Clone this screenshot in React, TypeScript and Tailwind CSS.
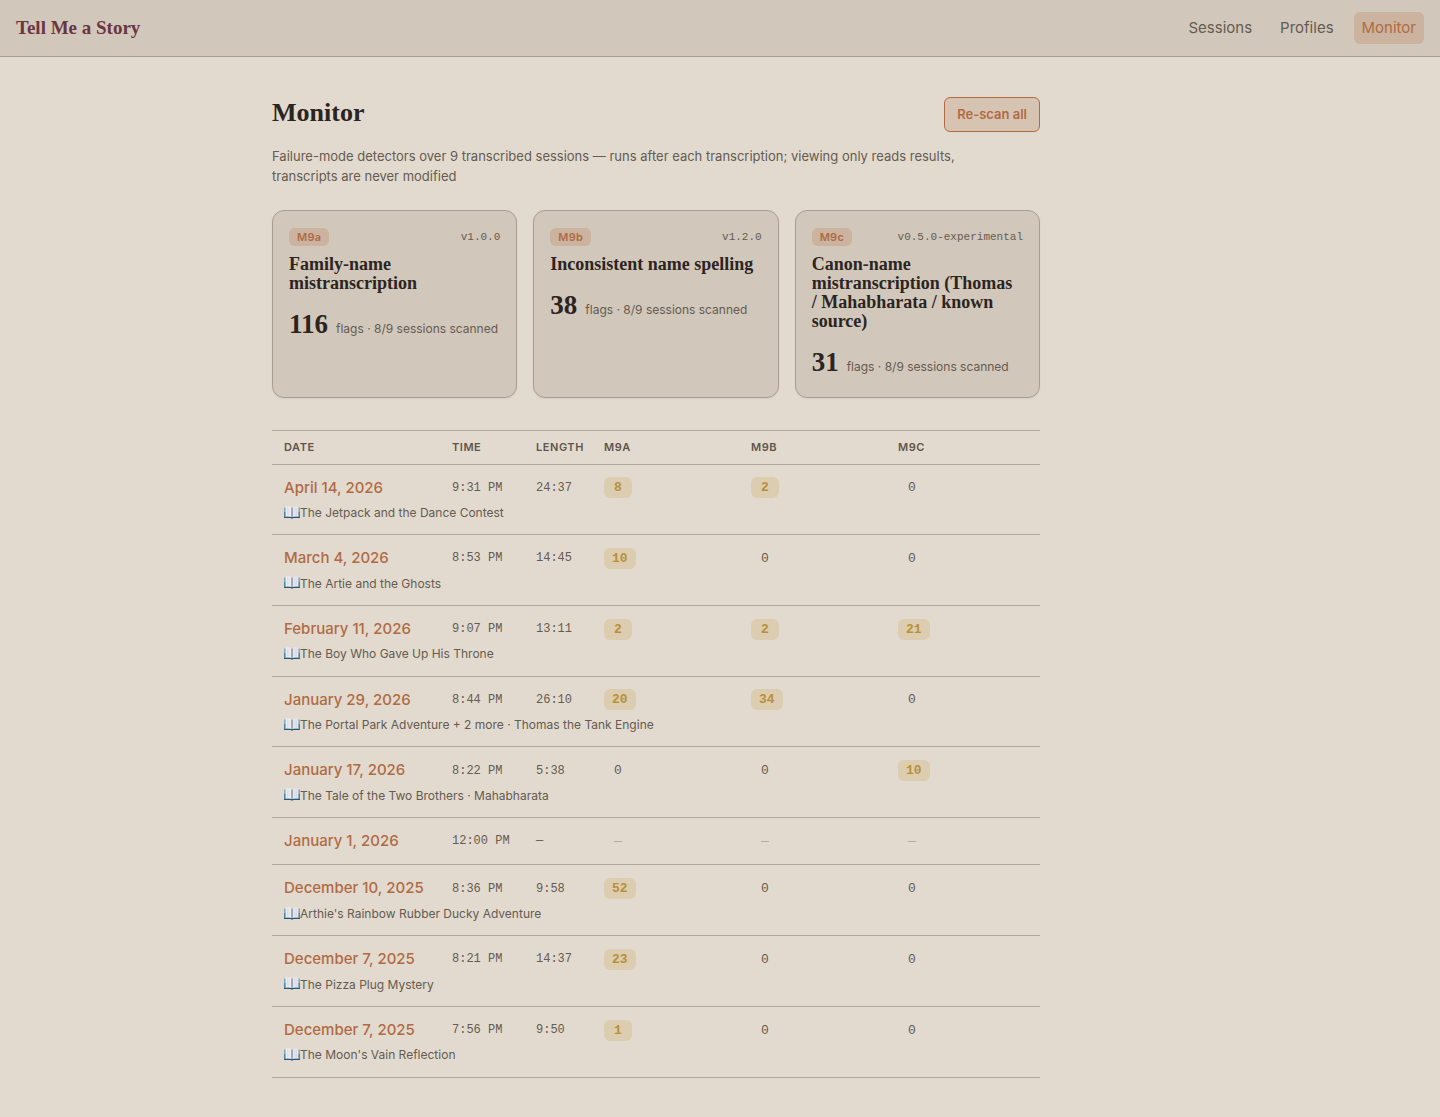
const detectors = [
  { id: "M9a", version: "v1.0.0", title: "Family-name mistranscription", flags: 116 },
  { id: "M9b", version: "v1.2.0", title: "Inconsistent name spelling", flags: 38 },
  {
    id: "M9c",
    version: "v0.5.0-experimental",
    title: "Canon-name mistranscription (Thomas / Mahabharata / known source)",
    flags: 31,
  },
];

type Session = {
  date: string;
  time: string;
  length: string;
  counts: (number | null)[];
  story?: string;
};

const sessions: Session[] = [
  { date: "April 14, 2026", time: "9:31 PM", length: "24:37", counts: [8, 2, 0], story: "The Jetpack and the Dance Contest" },
  { date: "March 4, 2026", time: "8:53 PM", length: "14:45", counts: [10, 0, 0], story: "The Artie and the Ghosts" },
  { date: "February 11, 2026", time: "9:07 PM", length: "13:11", counts: [2, 2, 21], story: "The Boy Who Gave Up His Throne" },
  { date: "January 29, 2026", time: "8:44 PM", length: "26:10", counts: [20, 34, 0], story: "The Portal Park Adventure + 2 more · Thomas the Tank Engine" },
  { date: "January 17, 2026", time: "8:22 PM", length: "5:38", counts: [0, 0, 10], story: "The Tale of the Two Brothers · Mahabharata" },
  { date: "January 1, 2026", time: "12:00 PM", length: "—", counts: [null, null, null] },
  { date: "December 10, 2025", time: "8:36 PM", length: "9:58", counts: [52, 0, 0], story: "Arthie's Rainbow Rubber Ducky Adventure" },
  { date: "December 7, 2025", time: "8:21 PM", length: "14:37", counts: [23, 0, 0], story: "The Pizza Plug Mystery" },
  { date: "December 7, 2025", time: "7:56 PM", length: "9:50", counts: [1, 0, 0], story: "The Moon's Vain Reflection" },
];

function BookIcon() {
  return (
    <svg className="w-4 h-4 shrink-0" viewBox="0 0 16 16" aria-hidden="true">
      <path d="M0 2.500h16V13H0z" fill="#7fa9bf" />
      <path d="M0 7h16v6H9.500L8 13.500 6.500 13H0z" fill="#4b86a6" />
      <path d="M0 12h16v1H9.500L8 13.600 6.500 13H0z" fill="#2b5670" />
      <path d="M1.600 2C3.500 1.300 6.500 1.300 8 2.500v9.600c-1.700-.9-4.500-.9-6.400-.3z" fill="#efeff3" />
      <path d="M14.400 2C12.500 1.300 9.500 1.300 8 2.500v9.600c1.700-.9 4.500-.9 6.400-.3z" fill="#e6e7ed" />
      <path d="M3.500 2.500v8M5 2.500v8M11 2.500v8M12.500 2.500v8" stroke="#d3d5de" strokeWidth=".7" />
      <path d="M7 2.200 8 2.700l1-.5v9.300l-1 .6-1-.6z" fill="#a3a7b3" />
    </svg>
  );
}

function Count({ value }: { value: number | null }) {
  const base = "inline-block min-w-7 px-2 rounded-md text-center text-[13px] leading-[21px] font-['Liberation_Mono',monospace]";
  if (value === null) {
    return <span className={`${base} text-[#b5aca0]`}>—</span>;
  }
  if (value === 0) {
    return <span className={`${base} text-[#655b50]`}>0</span>;
  }
  return <span className={`${base} font-bold text-[#b8903a] bg-[#dccdb1]`}>{value}</span>;
}

function Navbar() {
  return (
    <header className="bg-[#d1c7bb] border-b border-[#a99d91]">
      <div className="flex items-center justify-between h-14 px-4">
        <a href="#" className="text-[19px] font-bold text-[#6b3541] font-['Liberation_Serif',serif]">
          Tell Me a Story
        </a>
        <nav className="flex items-center gap-3 text-[15px] leading-6 text-[#655b50]">
          <a href="#sessions" className="px-2 py-1 rounded-md">Sessions</a>
          <a href="#profiles" className="px-2 py-1 rounded-md">Profiles</a>
          <a href="#monitor" className="px-2 py-1 rounded-md bg-[#cbb3a0] text-[#b06b43]">Monitor</a>
        </nav>
      </div>
    </header>
  );
}

export default function App() {
  return (
    <div className="min-h-screen bg-[#e2dacf] text-[#2c2420] font-[Inter,sans-serif]">
      <Navbar />
      <main className="max-w-4xl mx-auto pt-10 pb-10">
        <div className="max-w-3xl">
          <div className="flex items-start justify-between">
            <h1 className="text-[26px] leading-8 font-bold font-['Liberation_Serif',serif]">Monitor</h1>
            <button
              type="button"
              className="px-3 py-2 rounded-md border border-[#b06b43] bg-[#d7c3b1] text-[13px] leading-[17px] font-semibold text-[#b06b43]"
            >
              Re-scan all
            </button>
          </div>
          <p className="mt-3.5 pr-6 text-[13px] leading-5 text-[#655b50]">
            Failure-mode detectors over 9 transcribed sessions — runs after each transcription; viewing only reads results,
            transcripts are never modified
          </p>

          <div className="grid grid-cols-3 gap-4 mt-6">
            {detectors.map((d) => (
              <section key={d.id} className="p-4 rounded-xl border border-[#a99d91] bg-[#d1c7bb] shadow-xs">
                <div className="flex items-center justify-between h-5">
                  <span className="px-2 rounded-md bg-[#cbb3a0] text-[11px] leading-[18px] font-semibold tracking-wide text-[#b06b43]">
                    {d.id}
                  </span>
                  <span className="text-[11px] text-[#655b50] font-['Liberation_Mono',monospace]">{d.version}</span>
                </div>
                <h2 className="mt-2 pr-1 text-[18px] leading-[19px] font-bold font-['Liberation_Serif',serif]">{d.title}</h2>
                <p className="flex items-baseline gap-2 mt-3">
                  <span className="text-[27px] leading-[38px] font-bold font-['Liberation_Serif',serif]">{d.flags}</span>
                  <span className="text-[12px] text-[#655b50]">flags · 8/9 sessions scanned</span>
                </p>
              </section>
            ))}
          </div>

          <table className="w-full mt-8 table-fixed border-collapse border-y border-[#b1a79b] text-left">
            <colgroup>
              <col className="w-[168px]" />
              <col className="w-[84px]" />
              <col className="w-[68px]" />
              <col className="w-[147px]" />
              <col className="w-[147px]" />
              <col />
            </colgroup>
            <thead className="border-b border-[#b1a79b]">
              <tr className="text-[11px] leading-normal tracking-wider text-[#5f554a]">
                {["DATE", "TIME", "LENGTH", "M9A", "M9B", "M9C"].map((label) => (
                  <th key={label} scope="col" className="pl-3 py-2 font-semibold">{label}</th>
                ))}
              </tr>
            </thead>
            {sessions.map((s) => (
              <tbody key={s.date + s.time} className="border-b border-[#b1a79b]">
                <tr className="text-[12px] text-[#655b50]">
                  <td className={`pl-3 pt-3 text-[15px] leading-normal font-medium whitespace-nowrap ${s.story ? "" : "pb-3"}`}>
                    <a href="#session" className="text-[#b06b43]">{s.date}</a>
                  </td>
                  <td className={`pl-3 pt-3 whitespace-nowrap font-['Liberation_Mono',monospace] ${s.story ? "" : "pb-3"}`}>{s.time}</td>
                  <td className={`pl-3 pt-3 font-['Liberation_Mono',monospace] ${s.story ? "" : "pb-3"}`}>{s.length}</td>
                  {s.counts.map((c, i) => (
                    <td key={i} className={`pl-3 pt-3 leading-none ${s.story ? "" : "pb-3"}`}>
                      <Count value={c} />
                    </td>
                  ))}
                </tr>
                {s.story && (
                  <tr>
                    <td colSpan={6} className="pl-3 pt-1 pb-3 text-[12px] leading-[1.6] text-[#655b50]">
                      <span className="flex items-center">
                        <BookIcon />
                        {s.story}
                      </span>
                    </td>
                  </tr>
                )}
              </tbody>
            ))}
          </table>
        </div>
      </main>
    </div>
  );
}
